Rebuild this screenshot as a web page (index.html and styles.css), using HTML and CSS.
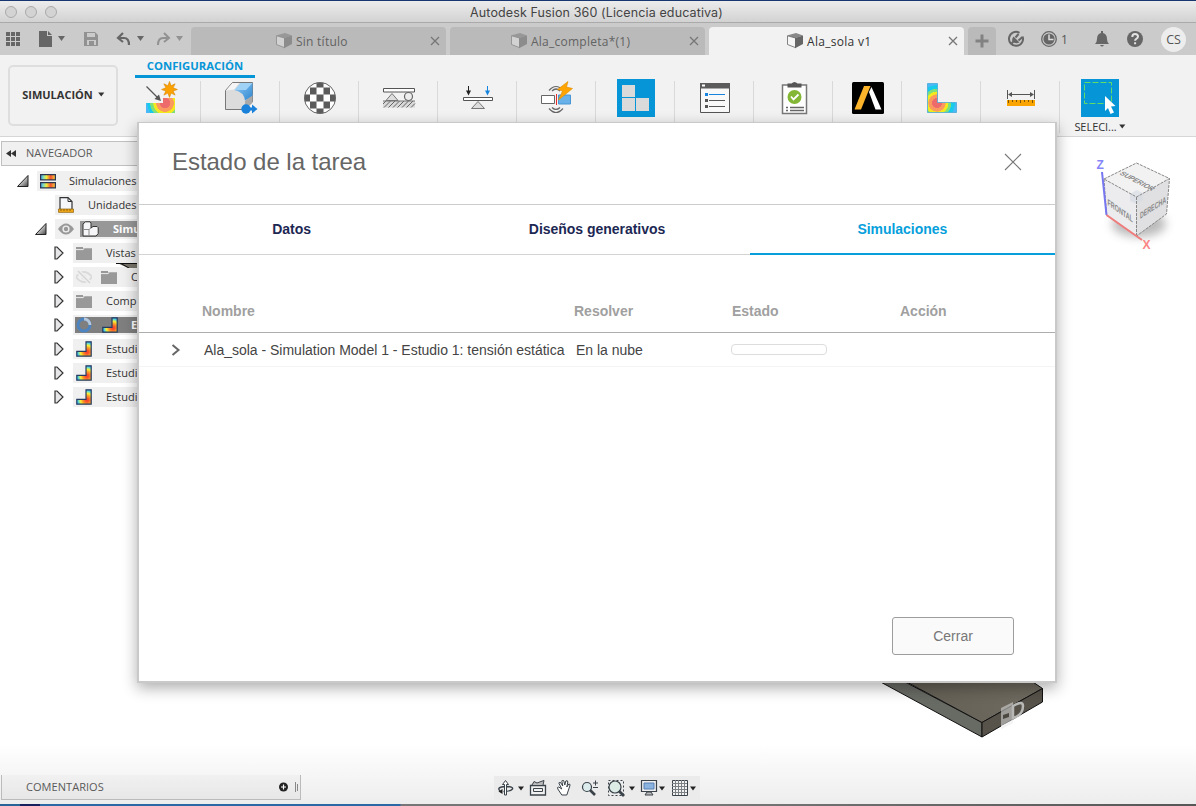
FILE: index.html
```html
<!DOCTYPE html>
<html lang="es">
<head>
<meta charset="utf-8">
<title>Autodesk Fusion 360 (Licencia educativa)</title>
<link rel="stylesheet" href="styles.css">
</head>
<body>
<svg class="defs" width="0" height="0" aria-hidden="true">
  <defs>
    <radialGradient id="heatStar" gradientUnits="userSpaceOnUse" cx="20" cy="22" r="20">
      <stop offset=".25" stop-color="#ee6b6b"/><stop offset=".27" stop-color="#fb9a5e"/><stop offset=".43" stop-color="#fb9a5e"/><stop offset=".45" stop-color="#f6e71c"/><stop offset=".57" stop-color="#f1ea20"/><stop offset=".6" stop-color="#7fe07a"/><stop offset=".73" stop-color="#7fe07a"/><stop offset=".75" stop-color="#19cbea"/><stop offset=".87" stop-color="#19cbea"/><stop offset=".9" stop-color="#4bb8f7"/>
    </radialGradient>
    <radialGradient id="heatL" gradientUnits="userSpaceOnUse" cx="10" cy="20" r="20">
      <stop offset=".24" stop-color="#ee6b6b"/><stop offset=".26" stop-color="#fb9a5e"/><stop offset=".42" stop-color="#fb9a5e"/><stop offset=".44" stop-color="#f6e71c"/><stop offset=".56" stop-color="#f1ea20"/><stop offset=".58" stop-color="#7fe07a"/><stop offset=".7" stop-color="#7fe07a"/><stop offset=".72" stop-color="#19cbea"/><stop offset=".88" stop-color="#19cbea"/><stop offset=".9" stop-color="#4bb8f7"/>
    </radialGradient>
    <radialGradient id="heatSmall" gradientUnits="userSpaceOnUse" cx="11" cy="11" r="12">
      <stop offset=".1" stop-color="#f8462c"/><stop offset=".35" stop-color="#fb9a25"/><stop offset=".55" stop-color="#f9ef35"/><stop offset=".75" stop-color="#49d4e8"/><stop offset="1" stop-color="#2a6df0"/>
    </radialGradient>
    <linearGradient id="heatBar"><stop offset="0" stop-color="#3aa0ef"/><stop offset=".22" stop-color="#8fe3ae"/><stop offset=".4" stop-color="#f6ea35"/><stop offset=".68" stop-color="#f4512f"/><stop offset="1" stop-color="#f7d63a"/></linearGradient>
    <linearGradient id="treeFill" x1="0" y1="0" x2="1" y2="1"><stop offset=".35" stop-color="#e8e8e8"/><stop offset="1" stop-color="#444"/></linearGradient>
    <linearGradient id="blueFace" x1="0" y1="0" x2="1" y2="1"><stop offset="0" stop-color="#8ccaf7"/><stop offset="1" stop-color="#3187cf"/></linearGradient>
    <linearGradient id="slab" x1="0" y1="0" x2="1" y2="0"><stop offset="0" stop-color="#625e54"/><stop offset="1" stop-color="#706b60"/></linearGradient>
    <filter id="soft" x="-50%" y="-50%" width="200%" height="200%"><feGaussianBlur stdDeviation="5"/></filter>
  </defs>
  <symbol id="box" viewBox="0 0 16 16"><path d="M0 2.500 9 0l7 2.500-7.500 2.500z" fill="currentColor" opacity=".75"/><path d="M.5 2.800 8.500 5v9.600L.5 11.500z" fill="#fff" fill-opacity=".35" stroke="currentColor" stroke-width=".8"/><path d="M8 5 16 2.500v8.600l-8 4.200z" fill="currentColor"/></symbol>
  <symbol id="close" viewBox="0 0 10 10"><path d="M1 1l8 8M9 1 1 9" stroke="currentColor" stroke-width="1.300"/></symbol>
  <symbol id="caret" viewBox="0 0 8 6"><path d="M0 .5h7.400L3.700 5.500z" fill="currentColor"/></symbol>
  <symbol id="open" viewBox="0 0 12 12"><path d="M11 .5V11.500H.5z" fill="url(#treeFill)" stroke="#222"/></symbol>
  <symbol id="shut" viewBox="0 0 10 14"><path d="M1 1v12h2l6-6-6-6z" fill="#e6e6e9" stroke="#333" stroke-width="1.200"/></symbol>
  <symbol id="folder" viewBox="0 0 16 13"><path d="M0 0h7v1.300h9V13H0z" fill="#999"/><path d="M0 2.600h7l1.400-1.300" stroke="#eee" stroke-width="1" fill="none"/></symbol>
  <symbol id="study" viewBox="0 0 16 16"><path d="M10 .8h5.200v14.400H.8v-4.900H10z" fill="url(#heatSmall)" stroke="#253b60" stroke-width="1.200"/></symbol>
</svg>

<div class="app">
  <header class="titlebar">
    <div class="lights"><i></i><i></i><i></i></div>
    <span class="window-title">Autodesk Fusion 360 (Licencia educativa)</span>
  </header>

  <div class="tabbar">
    <div class="quick">
      <svg width="191" height="32" viewBox="0 23 191 32">
        <g fill="#666">
          <path d="M6 32h4v4H6zm5 0h4v4h-4zm5 0h4v4h-4zM6 37h4v4H6zm5 0h4v4h-4zm5 0h4v4h-4zM6 42h4v4H6zm5 0h4v4h-4zm5 0h4v4h-4z"/>
          <path d="M39 31h8v5h5v11H39zm9 0 4 4h-4z"/>
          <path d="M58 36h7l-3.500 5z"/>
          <path d="M137 36h7l-3.500 5z"/>
        </g>
        <g fill="#929292"><path d="M84 32h11l3 3v11H84zm3 1v4h8v-4zm0 7v5h2v-4h5v4h2v-5z" fill-rule="evenodd"/><path d="M176 36h7l-3.500 5z"/></g>
        <path d="M123 33l-5 5 5 4M119 38h5q5 0 5 7" fill="none" stroke="#666" stroke-width="2.200"/>
        <path d="M164 33l5 5-5 4M168 38h-5q-5 0-5 7" fill="none" stroke="#929292" stroke-width="2"/>
      </svg>
    </div>
    <div class="tab"><span class="tab-label t1"><svg width="16" height="16"><use href="#box"/></svg>Sin título</span><svg class="x" width="10" height="10"><use href="#close"/></svg></div>
    <div class="tab"><span class="tab-label t2"><svg width="16" height="16"><use href="#box"/></svg>Ala_completa*(1)</span><svg class="x" width="10" height="10"><use href="#close"/></svg></div>
    <div class="tab active"><span class="tab-label t3"><svg width="16" height="16"><use href="#box"/></svg>Ala_sola v1</span><svg class="x" width="10" height="10"><use href="#close"/></svg></div>
    <div class="tab-add"><svg width="14" height="14"><path d="M7 .5v13M.5 7h13" stroke="#828282" stroke-width="3"/></svg></div>
    <div class="account">
      <svg width="66" height="32" viewBox="1000 23 66 32">
        <path d="M1019.500 32.800A7 7 0 1 0 1022.600 36.500" fill="none" stroke="#666" stroke-width="2"/>
        <path d="M1011 44l3-3" stroke="#666" stroke-width="2"/>
        <path d="M1013.500 36.500l6 6q-4.500 1.500-6.500-.5t.5-5.500z" fill="#666"/>
        <path d="M1015.500 37.500l3-3.500M1018.500 40.500l4-3.500" stroke="#666" stroke-width="2"/>
        <circle cx="1049" cy="39" r="7.300" fill="none" stroke="#666" stroke-width="1.300"/><circle cx="1049" cy="39" r="5.600" fill="#666"/>
        <path d="M1049 34.500V39.500h4.500" fill="none" stroke="#ddd" stroke-width="1.500"/>
      </svg>
      <span class="jobs">1</span>
      <svg width="64" height="32" viewBox="1087 23 64 32">
        <path d="M1101 31h2v2q4 1 4 6 0 3 2 5h-14q2-2 2-5 0-5 4-6zm-1 14h4q-2 3-4 0z" fill="#666"/>
        <circle cx="1135" cy="39" r="8" fill="#666"/>
        <path d="M1132.300 37q0-3 2.700-3 3 0 3 2.500 0 1.500-1.700 2.300-1.200.6-1.200 2M1135.100 42.300v2" fill="none" stroke="#e2e2e2" stroke-width="2"/>
      </svg>
      <span class="avatar">CS</span>
    </div>
  </div>

  <div class="ribbon">
    <div class="workspace">SIMULACIÓN<svg width="7" height="5"><use href="#caret"/></svg></div>
    <div class="tools">
      <div class="ribbon-tab">CONFIGURACIÓN</div>
      <div class="toolrow">
        <div class="tool first">
          <svg width="34" height="34"><path d="M1 22h17v-5h12v15H1z" fill="url(#heatStar)"/><path d="M1.500 5.500 14 18" stroke="#555" stroke-width="1.300"/><path d="M16 20l-6.500-2 4.500-4.500z" fill="#555"/><path d="M24.500.5l1.600 4.300 4-2-2 4 4.300 1.700-4.300 1.600 2 4-4-2-1.600 4.300-1.600-4.300-4 2 2-4-4.300-1.600 4.300-1.700-2-4 4 2z" fill="#fba101" stroke="#d98500" stroke-width=".6"/></svg>
        </div>
        <div class="tool">
          <svg width="34" height="34"><path d="M1.500 28.500V9.500l7-8h20v19.500l-8 7.500z" fill="#dcdcdc" stroke="#777"/><path d="M2 9.500l6.500-7.500H15l-4.500 6.500z" fill="#f5f5f5"/><path d="M21 28V20l7.500-7V21z" fill="#aaa"/><path d="M17 2h11.500v12.500L21 19.500Q20 11 10.500 9z" fill="url(#blueFace)"/><path d="M17 2h11.500L22 9 10.500 9z" fill="#a0d2f6"/><path d="M21 28h10" stroke="#1a82da" stroke-width="3"/><circle cx="22" cy="28" r="4.700" fill="#1a82da"/><path d="M28 23.500l5.500 4.500-5.500 4.500z" fill="#1a82da"/></svg>
        </div>
        <div class="tool">
          <svg width="34" height="34"><circle cx="17" cy="17" r="15.500" fill="#fff"/><path d="M13.500 1.500h7v5h-7zM7 6.500h6.500v7H7zm13.500 0H27v7h-6.500zM1.500 13.500H7v7H1.500zm12 0h7v7h-7zm13.500 0h5.500v7H27zM7 20.500h6.500v7H7zm13.500 0H27v7h-6.500zM13.500 27.500h7v5h-7z" fill="#5b5b5b"/><circle cx="17" cy="17" r="15.500" fill="none" stroke="#666"/></svg>
        </div>
        <div class="tool">
          <svg width="34" height="34"><path d="M1.500 7.500h31v3.500h-31z" fill="#fff" stroke="#555"/><path d="M10 12.500l6 7H4z" fill="#ddd" stroke="#777"/><circle cx="26.500" cy="15.500" r="4" fill="#eee" stroke="#666" stroke-width="1.200"/><path d="M1 20h32v6.500H1z" fill="#d8d8d8"/><path d="M1 23l3-3M2 26.500l6.500-6.500M6.500 26.500l6.500-6.500M11 26.500l6.500-6.500M15.500 26.500l6.500-6.500M20 26.500l6.500-6.500M24.500 26.500l6.500-6.500M29 26.500l4-4" stroke="#666"/><path d="M1 20h32" stroke="#777"/></svg>
        </div>
        <div class="tool">
          <svg width="34" height="34"><path d="M2.500 16.500h29v3h-29z" fill="#fff" stroke="#555"/><path d="M17 20.500l6.500 7h-13z" fill="#ddd" stroke="#777"/><path d="M7.500 5v7" stroke="#222"/><path d="M5 9.500h5l-2.500 5z" fill="#222"/><path d="M26.500 5v7" stroke="#1684df"/><path d="M24 9.500h5l-2.500 5z" fill="#1684df"/></svg>
        </div>
        <div class="tool">
          <svg width="34" height="34"><path d="M1.500 14.500h13v8h-13z" fill="#fff" stroke="#666"/><path d="M18.500 14h12v9h-12z" fill="#68b1e9" stroke="#4897d4"/><path d="M16.500 13v11" stroke="#e52a2a"/><path d="M9 9.500q7-8 14 0M12 10q4-4 8 0M9 27.500q7 8 14 0M12 26.500q4 4 8 0" fill="none" stroke="#666" stroke-width="1.200"/><path d="M28 .5 17.500 8.500l5 1.500-4 9 14-11.500-6-1.500z" fill="#ffa400" stroke="#db8d00" stroke-width=".6"/></svg>
        </div>
        <div class="tool">
          <svg width="38" height="38"><path fill="#0696d7" d="M0 0h38v38H0z"/><path fill="#dadada" d="M5 6h13v12H5zm0 13h13v13H5zm14 0h13v13H19z"/></svg>
        </div>
        <div class="tool">
          <svg width="34" height="34"><path d="M2.500 3v28.500h29V3z" fill="#f8f8f8" stroke="#555"/><path d="M2 2h30v5.500H2z" fill="#5b5b5b"/><path d="M4 3.500h3v2H4z" fill="#fff"/><path d="M7 12h3v3H7z" fill="#1684df"/><path d="M11 13.500h16" stroke="#1684df"/><path d="M7 18h3v3H7zm0 6h3v3H7z" fill="#555"/><path d="M11 19.500h16M11 25.500h16" stroke="#555"/></svg>
        </div>
        <div class="tool">
          <svg width="34" height="34"><path d="M5.500 4h24v28.500h-24z" fill="#fff" stroke="#777" stroke-width="1.500"/><path d="M10.500 2.500h4q3-3 6 0h4v4h-14z" fill="#555"/><circle cx="17.500" cy="16" r="7" fill="#83b735"/><path d="M14 15.500l2.500 3 5-5" fill="none" stroke="#fff" stroke-width="1.800"/><path d="M9 26.500h2m2 0H27M9 29.500h2m2 0H27" stroke="#666" stroke-width="1.300"/></svg>
        </div>
        <div class="tool narrow">
          <svg width="34" height="34"><rect x="1" y="1" width="32" height="32" rx="1.500"/><path d="M3.500 28.500 13 5h6.500L10 28.500z" fill="#fcb52b"/><path d="M18 11l2.500-5 10 22.500h-6z" fill="#fff"/></svg>
        </div>
        <div class="tool">
          <svg width="34" height="34" viewBox="-2 -2 34 34"><path d="M.5.500h10v19h19v10H.5z" fill="url(#heatL)" stroke="#47a9d8" stroke-width=".8"/></svg>
        </div>
        <div class="tool">
          <svg width="34" height="34"><path d="M3.500 9v9M30.500 9v9M5 13.500h24" stroke="#555"/><path d="M4 13.500l4-2.500v5zm26 0-4-2.500v5z" fill="#555"/><path d="M3 19h28v6H3z" fill="#faa400"/><path d="M4.500 19v3m4-3v2m4-2v2m4-2v3m4-3v2m4-2v2m4-2v3" stroke="#7c5500"/></svg>
        </div>
        <div class="tool select">
          <svg width="38" height="38"><path fill="#0696d7" d="M0 0h38v38H0z"/><path d="M3.500 3.500h27v21h-27z" fill="none" stroke="#61dc68" stroke-dasharray="6 2"/><path d="M24 17l10.500 10-4.500.5 3 6-3.500 1.500-2.500-6-3 3z" fill="#fff"/></svg>
          <span>SELECI...<svg width="7" height="5"><use href="#caret"/></svg></span>
        </div>
      </div>
    </div>
  </div>

  <main class="canvas">
    <aside class="browser">
      <div class="browser-head"><svg width="10" height="7"><path d="M5 0v7L0 3.500zM10 0v7L5 3.500z" fill="#333"/></svg><span>NAVEGADOR</span></div>
      <div class="row lvl0"><svg width="12" height="12"><use href="#open"/></svg><div class="cell"><svg width="16" height="15"><path d="M.6.600h14.800v5.300H.600zM.6 8.600h14.800v5.300H.600z" fill="url(#heatBar)" stroke="#2c3650" stroke-width="1.200"/></svg><span class="lbl">Simulaciones</span></div></div>
      <div class="row lvl1"><i class="no-arrow"></i><div class="cell"><svg width="16" height="16"><path d="M2 12V.600h8L14 4.500V12" fill="#f5f7fb" stroke="#333" stroke-width="1.200"/><path d="M10 .600V4.500h4" fill="none" stroke="#333"/><path d="M.5 12h15v3.400H.5z" fill="#f2a91b" stroke="#8e630c" stroke-width=".7"/><path d="M3 12v2m3-2v2m3-2v2m3-2v2" stroke="#8e630c"/></svg><span class="lbl">Unidades</span></div></div>
      <div class="row lvl1 root"><svg width="12" height="12"><use href="#open"/></svg><div class="cell"><svg width="16" height="12"><path d="M0 6q8-11 16 0-8 11-16 0z" fill="#999"/><circle cx="8" cy="6" r="3.600" fill="#eee"/><circle cx="8" cy="6" r="2.200" fill="#999"/></svg><div class="picked"><svg width="17" height="16"><path d="M1 3 3.500.800H8l1 1.200v5l2-1.500h4l1.200 1.200v6L14 15H1z" fill="#f6f6f8" stroke="#333"/><path d="M1.500 8.500h5.500L9 7M7 15V8.500" fill="none" stroke="#8a8a8a"/></svg><b>Simu</b></div></div></div>
      <div class="row lvl2"><svg width="10" height="14"><use href="#shut"/></svg><div class="cell"><svg width="16" height="13"><use href="#folder"/></svg><span class="lbl">Vistas</span></div></div>
      <div class="row lvl2"><svg width="10" height="14"><use href="#shut"/></svg><div class="cell"><svg width="16" height="14"><path d="M0 7q8-10 16 0-8 10-16 0z" fill="none" stroke="#dadada" stroke-width="1.800"/><circle cx="8" cy="7" r="2.500" fill="#dadada"/><path d="M2 1l12 12" stroke="#f0f0f0" stroke-width="4"/><path d="M2 1l12 12" stroke="#d4d4d4" stroke-width="1.500"/></svg><svg class="gap" width="16" height="13"><use href="#folder"/></svg><span class="lbl">C</span></div></div>
      <div class="row lvl2"><svg width="10" height="14"><use href="#shut"/></svg><div class="cell"><svg width="16" height="13"><use href="#folder"/></svg><span class="lbl">Comp</span></div></div>
      <div class="row lvl2 running"><svg width="10" height="14"><use href="#shut"/></svg><div class="cell"><div class="picked"><svg width="16" height="16"><circle cx="8" cy="8" r="6" fill="none" stroke="#4c84c2" stroke-width="2.800"/><path d="M8 2a6 6 0 0 1 6 6" fill="none" stroke="#b6c8da" stroke-width="2.800"/></svg><svg class="gap" width="16" height="16"><use href="#study"/></svg><b>E</b></div></div></div>
      <div class="row lvl2"><svg width="10" height="14"><use href="#shut"/></svg><div class="cell"><svg width="16" height="16"><use href="#study"/></svg><span class="lbl">Estudi</span></div></div>
      <div class="row lvl2"><svg width="10" height="14"><use href="#shut"/></svg><div class="cell"><svg width="16" height="16"><use href="#study"/></svg><span class="lbl">Estudi</span></div></div>
      <div class="row lvl2"><svg width="10" height="14"><use href="#shut"/></svg><div class="cell"><svg width="16" height="16"><use href="#study"/></svg><span class="lbl">Estudi</span></div></div>
    </aside>

    <svg class="wing-tip" width="22" height="5"><path d="M0 0h22v5H12L1 0z" fill="#77756b"/><path d="M0 .5h22M5 .5 13 5" stroke="#111"/></svg>

    <svg class="viewcube" width="100" height="110" viewBox="1084 148 100 110">
      <ellipse cx="1139" cy="224" rx="27" ry="13" fill="#777" opacity=".5" filter="url(#soft)"/>
      <path d="M1104 179l32.500-16L1169.500 178.500 1136.500 197z" fill="#f2f2f3"/>
      <path d="M1104 179l32.500 18v39L1106.500 215z" fill="#ececee"/>
      <path d="M1136.500 197l33-18.500L1166.500 214 1136.500 236z" fill="#e0e0e2"/>
      <path d="M1136.500 190l6.500 3v7l-6.500 4-6.500-3v-7z" fill="#d4dae2" opacity=".6"/>
      <path d="M1104 179l32.500-16 33 15.500-33 18.500zl2.500 36 30 21 30-22 3-35.500M1136.500 197v39" fill="none" stroke="#888" stroke-dasharray="3 1"/>
      <path d="M1102 172l4.500 43" stroke="#7676f0" stroke-width="2"/>
      <path d="M1106.500 215l35.500 25" stroke="#f07c7c" stroke-width="2"/>
      <text x="1096.500" y="169" class="axis" fill="#8585fa">Z</text><text x="1142.500" y="249" class="axis" fill="#fa8585">X</text>
      <text class="face" transform="matrix(.88 .46 -.75 .5 1119 174)" textLength="37" lengthAdjust="spacingAndGlyphs">SUPERIOR</text>
      <text class="face side" transform="matrix(.82 .57 0 1 1107.500 205)" textLength="31" lengthAdjust="spacingAndGlyphs">FRONTAL</text>
      <text class="face side" transform="matrix(.84 -.54 0 1 1140 219)" textLength="31" lengthAdjust="spacingAndGlyphs">DERECHA</text>
    </svg>

    <svg class="model" width="180" height="70" viewBox="870 674 180 70">
      <path d="M864 673h24l94 49.500V737z" fill="#686a64" stroke="#111"/>
      <path d="M903 680h127l12.500 8.500L982 722.500z" fill="url(#slab)" stroke="#111"/>
      <path d="M982 722.500l60.500-34V702L982 737z" fill="#57524a" stroke="#111"/>
      <path d="M1001 708l12-6v21l-12 6z" fill="#ddd" opacity=".55"/>
      <path d="M1013 706q10-6 10 0 0 9-10 12z" fill="#555148" stroke="#b8b8b6" stroke-width="2.500"/>
      <path d="M1003 715l6-2v4l-6 2z" fill="#4b4841"/>
      <path d="M1001 729l12-6v-3l-12 6z" fill="#f4f4f4"/>
    </svg>

    <div class="comments"><span>COMENTARIOS</span><svg width="20" height="12"><circle cx="4.500" cy="6" r="4.500" fill="#222"/><path d="M4.500 3.500v5M2 6h5" stroke="#fff" stroke-width="1.200"/><path d="M16.500 1v10M18.500 3v7" stroke="#888"/></svg></div>

    <div class="navtools">
      <svg width="206" height="24" viewBox="494 776 206 24">
        <g fill="#222"><path d="M518 786.500h6l-3 4zM629 786.500h6l-3 4zM659 786.500h6l-3 4zM690 786.500h6l-3 4z"/></g>
        <g fill="none" stroke="#3a424a">
          <path d="M500 791q-4-4 5.500-4.500 8 0 7 2.500-2 2.500-9 2.500" stroke-width="1.400"/><path d="M504.500 795v-10.500h-2l3-4 3 4h-2V795z" fill="#fff"/><path d="M498.500 791.500l4-2.500v5z" fill="#222" stroke="none"/>
          <path d="M530.500 785.500h15v9.500h-15z" fill="#f1f1f1" stroke-width="1.300"/><path d="M533.500 788.500h9v3h-9z"/><path d="M532 785l2-3.500 3 1.500 4-1.500 3-1-1 4.500" fill="#bbb"/>
          <path d="M561 795l-4-6q-1-2 1-2l3 2-3-6q1-2 2 0l2 3-1-5q1-2 2 0l1 4 1-4q2-1 2 1l-1 5 2-3q2 0 1 2l-2 6-1 3z" fill="#fff" transform="translate(.8 0)"/>
          <circle cx="587" cy="787" r="4.500" fill="#dcebec" stroke-width="1.200"/><path d="M590 790l5 5" stroke-width="2.600"/><path d="M593 783h5m-2.500-2.500v5M593 787.500h5"/>
          <path d="M608.500 780.500h15v15h-15z" stroke-dasharray="2 2"/><circle cx="615" cy="787" r="6" fill="#dcebe5" stroke-width="1.200"/><path d="M619 791l5 5" stroke-width="2.800"/>
          <path d="M641.500 780.500h15v11h-15z" fill="#eee" stroke-width="1.200"/><path d="M644 783h10v6h-10z" fill="#8bb3df" stroke="#5680b4"/><path d="M647 792h4l2 3h-8z" fill="#bbb"/>
          <path d="M672.500 780.500h15v15h-15z" fill="#f3f3f3"/><path d="M675.500 780v15m3-15v15m3-15v15m3-15v15M672 783.500h15m-15 3h15m-15 3h15m-15 3h15" stroke="#7b8085"/>
        </g>
      </svg>
    </div>
  </main>
  <div class="dock-edge"></div>
</div>

<section class="dialog">
  <div class="dialog-head"><h1>Estado de la tarea</h1><svg width="18" height="18"><path d="M1 1l16 16M17 1 1 17" stroke="#777" stroke-width="1.100"/></svg></div>
  <nav class="dialog-tabs"><span>Datos</span><span>Diseños generativos</span><span class="on">Simulaciones</span></nav>
  <div class="grid thead"><span></span><span>Nombre</span><span>Resolver</span><span class="wide">Estado</span><span class="wide">Acción</span></div>
  <div class="grid job"><span class="chev"><svg width="10" height="12"><path d="M1.500 1l6 5-6 5" fill="none" stroke="#666" stroke-width="2"/></svg></span><span>Ala_sola - Simulation Model 1 - Estudio 1: tensión estática</span><span>En la nube</span><span><i class="progress"></i></span><span></span></div>
  <div class="dialog-foot"><button>Cerrar</button></div>
</section>
</body>
</html>
```
FILE: styles.css
```css
* { box-sizing: border-box; }
html, body { margin: 0; height: 100%; overflow: hidden; }
body { position: relative; width: 1196px; height: 806px; background: #fff; font-family: "Open Sans", "Noto Sans", sans-serif; font-size: 12px; color: #333; }
svg { display: block; flex: none; }
.defs { position: absolute; }
.app { display: flex; flex-direction: column; height: 806px; border-top: 1px solid #17356f; }

.titlebar { height: 22px; flex: none; display: flex; align-items: center; background: linear-gradient(#ececec, #d2d2d2); border-bottom: 1px solid #aaa; position: relative; justify-content: center; }
.lights { position: absolute; left: 5px; top: 5px; display: flex; gap: 8px; }
.lights i { width: 12px; height: 12px; border: 1px solid #aaa; border-radius: 50%; background: #d3d3d3; }
.window-title { padding: 1px 3px 0 0; font-family: Inter, sans-serif; font-size: 12.5px; letter-spacing: .12px; color: #444; }

.tabbar { height: 32px; flex: none; display: flex; align-items: flex-end; gap: 4px; background: #cbcbcb; }
.quick { width: 187px; height: 32px; }
.tab { width: 255px; height: 28px; flex: none; background: #bababa; border-radius: 4px 4px 0 0; color: #666; display: flex; align-items: center; justify-content: space-between; padding-right: 6px; }
.tab-label { display: flex; align-items: center; gap: 4px; font-size: 12px; white-space: nowrap; color: #626262; }
.tab-label svg { color: #8c8c8c; }
.t1 { padding-left: 85px; letter-spacing: .25px; }
.t2 { padding-left: 61px; letter-spacing: .25px; }
.t3 { padding-left: 78px; letter-spacing: .3px; }
.tab .x { color: #777; }
.tab.active { background: #f2f2f2; }
.tab.active .tab-label { color: #333; }
.tab.active .tab-label svg { color: #666; }
.tab-add { width: 28px; height: 28px; flex: none; background: #bababa; border-radius: 4px 4px 0 0; display: grid; place-items: center; }
.account { display: flex; align-items: center; height: 32px; }
.jobs { width: 21px; font-size: 12px; margin-left: -6px; padding-left: 1px; color: #555; }
.jobs + svg { margin-left: 6px; }
.avatar { width: 25px; height: 25px; margin-left: 10px; border-radius: 50%; background: #ededed; color: #555; font-size: 12.5px; display: grid; place-items: center; }

.ribbon { height: 82px; flex: none; display: flex; background: #f2f2f2; border-bottom: 1px solid #d6d6d6; }
.workspace { width: 110px; height: 61px; margin: 10px 4px 0 8px; padding: 0 0 2px 1px; flex: none; border: 2px solid #dedede; border-radius: 5px; display: flex; align-items: center; justify-content: center; gap: 5px; font-size: 11px; font-weight: 700; letter-spacing: 0; color: #333; }
.ribbon-tab { width: 120px; height: 23px; margin-left: 13px; padding-top: 3px; border-bottom: 3px solid #0696d7; color: #0696d7; font-size: 11.300px; line-height: 15px; font-weight: 700; text-align: center; white-space: nowrap; }
.toolrow { display: flex; margin-top: 3px; }
.tool { width: 79px; height: 53px; flex: none; padding-left: 1px; box-shadow: -1px 0 #d9d9d9; display: flex; flex-direction: column; align-items: center; }
.tool.first { box-shadow: none; }
.tool.narrow { width: 69px; }
.tool > svg { height: 34px; }
.tool > svg[width="38"] { height: 38px; margin-top: -2px; }
.select { height: 52px; }
.select span { display: flex; align-items: center; gap: 2px; font-size: 11px; letter-spacing: -.05px; line-height: 15px; margin-top: 2px; white-space: nowrap; }

.canvas { flex: 1; position: relative; background: linear-gradient(#fff 91%, #ededed); }
.browser { width: 160px; padding: 4px 0 0 1px; }
.browser-head { height: 25px; display: flex; align-items: center; gap: 10px; padding-left: 4px; margin-bottom: 3px; background: #f0f0f0; border: 1px solid #c0c0c0; font-size: 11px; color: #5a5a5a; }
.browser-head span, .comments span { padding-bottom: 2px; letter-spacing: .05px; }
.row { height: 24px; display: flex; align-items: center; padding-left: 16px; font-size: 11px; position: relative; z-index: 1; }
.lvl1 { padding-left: 34px; }
.lvl2 { padding-left: 53px; }
.no-arrow { width: 12px; }
.cell { flex: 1; height: 20px; margin-left: 8px; padding-left: 3px; background: #f0f0f0; display: flex; align-items: center; overflow: hidden; white-space: nowrap; }
.lvl2 .cell { margin-left: 9px; }
.lbl { margin-left: 14px; padding-bottom: 1px; }
.lvl0 .lbl { margin-left: 13px; }
.gap { margin-left: 9px; }
.picked { flex: 1; height: 16px; display: flex; align-items: center; background: #979797; color: #fff; }
.root .picked { margin-left: 6px; padding-left: 2px; }
.root b { margin-left: 14px; padding-bottom: 1px; }
.running .cell { padding-left: 2px; }
.running .picked { padding-left: 1px; background: #7f7f7f; }
.running .gap { margin-left: 10px; }
.running b { margin-left: 13px; padding-bottom: 1px; }
.wing-tip { position: absolute; left: 116px; top: 126px; z-index: 2; }
.viewcube { position: absolute; left: 1084px; top: 11px; }
.axis { font: 700 12px "Liberation Sans", sans-serif; }
.face { font: 700 8.500px "Liberation Sans", sans-serif; fill: #888; }
.face.side { font-size: 9px; }
.model { position: absolute; left: 870px; top: 537px; }
.comments { position: absolute; left: 1px; bottom: 4px; width: 300px; height: 25px; padding: 0 1px 0 24px; display: flex; align-items: center; justify-content: space-between; background: linear-gradient(#f1f1f1, #e7e7e7); border: 1px solid #bbb; border-top: 0; font-size: 11px; color: #5a5a5a; }
.navtools { position: absolute; left: 494px; bottom: 4px; width: 206px; height: 24px; background: #ebebeb; }
.dock-edge { height: 2px; flex: none; background: linear-gradient(90deg, #286397 0 20px, #17205e 20px 40px, #2c68a6 40px 400px, #777 401px 700px, #575757 100%); }

.dialog { position: absolute; left: 137px; top: 122px; width: 920px; height: 561px; z-index: 5; display: flex; flex-direction: column; background: #fff; border: 2px solid #c9c9c9; border-top-width: 1px; box-shadow: 0 5px 14px rgba(0, 0, 0, .32); font-family: "Liberation Sans", Arial, sans-serif; }
.dialog-head { height: 82px; flex: none; display: flex; align-items: center; justify-content: space-between; padding: 0 33px 3px; border-bottom: 1px solid #ccc; }
h1 { margin: 0; font-size: 24px; font-weight: 400; letter-spacing: -.04px; color: #666; }
.dialog-tabs { height: 50px; flex: none; display: grid; grid-template-columns: repeat(3, 1fr); font-size: 14px; font-weight: 700; letter-spacing: -.03px; color: #1c2853; }
.dialog-tabs span { display: grid; place-items: center; padding-bottom: 1px; border-bottom: 1px solid #d3d3d3; }
.dialog-tabs .on { padding-bottom: 0; border-bottom: 2px solid #069fdc; color: #069fdc; }
.grid { display: grid; grid-template-columns: 65px 372px 156px 168px 1fr; align-items: center; flex: none; font-size: 14px; white-space: nowrap; }
.thead { height: 78px; padding-top: 35px; border-bottom: 1px solid #adadad; color: #a0a0a0; font-weight: 700; }
.thead span { margin-left: -2px; }
.thead .wide { margin-left: 0; }
.job { height: 34px; color: #444; border-bottom: 1px solid #f4f4f4; }
.job span { letter-spacing: -.01px; }
.chev { padding-left: 32px; }
.progress { display: block; width: 96px; height: 11px; margin-left: -1px; border: 1px solid #ddd; border-radius: 4px; }
.dialog-foot { margin-top: auto; padding: 0 41px 26px; display: flex; justify-content: flex-end; }
button { width: 122px; height: 38px; border: 1px solid #9d9d9d; border-radius: 3px; background: #fafafa; color: #777; font: 14px "Liberation Sans", Arial, sans-serif; }
```
